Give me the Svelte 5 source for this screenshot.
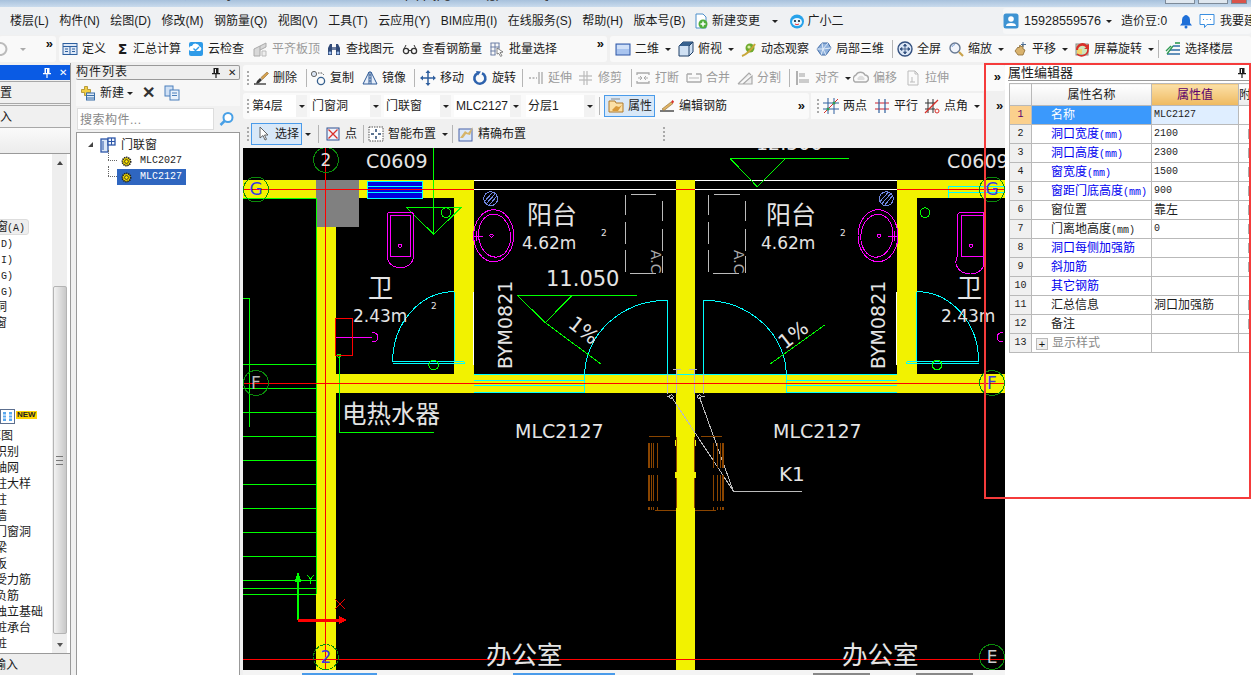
<script>
  const icons = {
    def: '<rect x="1" y="2.5" width="14" height="11" fill="#dfe9f7" stroke="#2d5f9e"/><path d="M1 5.5h14M8 5.5v8M3 8h3M3 10.5h3M10 8h3M10 10.5h3" stroke="#2d5f9e"/>',
    cloud: '<rect x="1" y="1" width="14" height="14" rx="2" fill="#2f9be8"/><path d="M3 10a2.5 2.5 0 0 1 1-5 4 4 0 0 1 7.5.5A2.4 2.4 0 0 1 12 10z" fill="#fff"/><path d="M5.5 7.5l2 2 3.5-3.5" stroke="#2f9be8" stroke-width="1.4" fill="none"/>',
    plane: '<path d="M2 15V8l6-3v10zM8 5l6-3v4l-6 3" fill="#d8d8d8" stroke="#aaa"/><path d="M10 10h4v5h-4z" fill="#eee" stroke="#bbb"/>',
    find: '<path d="M2 14V7l2-4h2v11zM14 14V7l-2-4h-2v11z" fill="#314a78"/><rect x="6" y="6" width="4" height="3" fill="#6d7ea0"/><circle cx="4" cy="12" r="1.4" fill="#9fc0ef"/><circle cx="12" cy="12" r="1.4" fill="#9fc0ef"/>',
    glass: '<circle cx="4" cy="10" r="2.6" fill="none" stroke="#333" stroke-width="1.3"/><circle cx="12" cy="10" r="2.6" fill="none" stroke="#333" stroke-width="1.3"/><path d="M6.5 9.5h3M2 8l2-4M14 8l-2-4" stroke="#333"/>',
    batch: '<path d="M1.5 2h9M1.5 6h9M1.5 10h5M1.5 14h5M2 2v12M6 2v12M10 2v6" stroke="#6c7fa5" fill="none"/><path d="M8 7l6 4-3 .6 2 3-1.400.8-1.800-3L8 13z" fill="#fff" stroke="#555" stroke-width=".7"/>',
    d2: '<rect x="1" y="3" width="14" height="11" fill="#a9c4ef" stroke="#2e56a5"/><rect x="2" y="4" width="12" height="4" fill="#d0e0f8"/>',
    top: '<path d="M1 5l4-4h10v10l-4 4H1z" fill="#cfe0f3" stroke="#1f3f66"/><path d="M1 5l4-4h10l-4 4z" fill="#37618f"/><path d="M11 5v10M11 5l4-4" stroke="#1f3f66"/>',
    orbit: '<circle cx="9" cy="7" r="4.500" fill="#6eaa2b"/><circle cx="8" cy="6" r="1.600" fill="#d9efa6"/><path d="M1 15c3-1 9-5 13-12" stroke="#c9a73a" stroke-width="2" fill="none"/>',
    local: '<path d="M1 8l5-6h6l3 5-5 7H5z" fill="#8fb1dc" stroke="#3f6aa5"/><path d="M6 2l1 6-2 6M1 8h6l8-1M12 2L7 8l3 6" stroke="#e8f0fb" fill="none" stroke-width=".9"/>',
    full: '<circle cx="8" cy="8" r="7" fill="#dbe6f5" stroke="#33507f" stroke-width="1.400"/><path d="M8 3v10M3 8h10M8 3L6.500 5h3zM8 13l-1.500-2h3zM3 8l2-1.500v3zM13 8l-2-1.500v3z" stroke="#33507f" fill="#33507f" stroke-width=".8"/>',
    zoom: '<circle cx="7" cy="7" r="5" fill="#f2f5fb" stroke="#687a94" stroke-width="1.400"/><path d="M11 11l4 4" stroke="#c8a24a" stroke-width="2.200"/><path d="M4 6a3.500 3.500 0 0 1 3-2.500" stroke="#7aa0d8" fill="none"/>',
    pan: '<path d="M3 10l3-4 1 1 1-3 1 2 2-2v4l2 1-2 5H6z" fill="#d9b26d" stroke="#8a6a32" stroke-width=".8"/><path d="M11 1v5M9 3.500h5" stroke="#4c6f95"/>',
    spin: '<rect x="2" y="3" width="12" height="11" fill="#cde6bc" stroke="#888"/><rect x="3" y="8" width="5" height="5" fill="#f3d36b"/><path d="M2 9a6.500 6.500 0 0 1 11-5l2-1v5h-5l2-1.500A4.500 4.500 0 0 0 4 9z" fill="#d9302a"/><path d="M14 8a6.500 6.500 0 0 1-11 5" stroke="#d9302a" stroke-width="1.600" fill="none"/>',
    floors: '<path d="M2 13h13M5 9h10M8 5h7" stroke="#2f6ea5" stroke-width="1.600"/><path d="M2 13l6-8M1 10l5-5" stroke="#2e9a52" stroke-width="1.300"/><path d="M10 2h5" stroke="#2e9a52" stroke-width="1.600"/>',
    brush: '<path d="M1 14h12" stroke="#333" stroke-width="1.300"/><path d="M4 11l3-3 2 2-3 3c-1 .5-2 .5-3 .5z" fill="#333"/><path d="M8 7.500L14 2l1.500 1.500-6 6z" fill="#d5a04d" stroke="#8f6a32" stroke-width=".6"/>',
    copy: '<circle cx="4" cy="4" r="2.600" fill="#dbe6f5" stroke="#666"/><circle cx="11" cy="11" r="3.600" fill="none" stroke="#37618f" stroke-width="1.300"/><path d="M8 3h4l2 2" stroke="#555" fill="none" stroke-dasharray="1.500 1"/>',
    mirror: '<path d="M7 2v12H1zM9 2v12h6z" fill="#e6eefa" stroke="#2e5a96"/><path d="M8 1v14" stroke="#2e5a96" stroke-dasharray="2 1"/>',
    move: '<path d="M8 1v14M1 8h14" stroke="#2f5f9e" stroke-width="1.500"/><path d="M8 0l2.500 3h-5zM8 16l2.500-3h-5zM0 8l3-2.500v5zM16 8l-3-2.500v5z" fill="#2f5f9e"/>',
    rot: '<path d="M10 3.200a5.500 5.500 0 1 1-4.500.1" fill="none" stroke="#2d62ad" stroke-width="2.600"/><path d="M4 1l5 .5-3 4z" fill="#2d62ad"/>',
    ext: '<path d="M1 8h8" stroke="#aaa" stroke-dasharray="2 1.500" stroke-width="1.500"/><path d="M11 2v12M14 2v12" stroke="#aaa" stroke-width="1.300"/>',
    trim: '<path d="M1 6h13M1 10h13" stroke="#aaa" stroke-width="1.200"/><path d="M6 1v14M9 1v14" stroke="#bbb" stroke-width="1.200"/>',
    brk: '<path d="M2 5V3h12v2M2 11v2h12v-2" fill="none" stroke="#aaa" stroke-width="1.300"/><path d="M3 8h3M10 8h3" stroke="#aaa"/><path d="M5 6l2 2-2 2M11 6L9 8l2 2" stroke="#aaa" fill="none"/>',
    mrg: '<path d="M1 4h5M10 4h5M1 12h14M1 4v8M15 4v8" fill="none" stroke="#aaa" stroke-width="1.300"/><path d="M3 8h10" stroke="#bbb"/>',
    split: '<path d="M1 14h14V6L6 14M1 14l11-11 2 2" fill="#eee" stroke="#aaa" stroke-width="1.200"/>',
    align: '<path d="M2 1v14" stroke="#999" stroke-width="1.500"/><rect x="4" y="3" width="6" height="4" fill="#ccc"/><rect x="4" y="9" width="10" height="4" fill="#ccc"/>',
    off: '<path d="M2 12a4 4 0 0 1 1-7 5 5 0 0 1 9 0 3.600 3.600 0 0 1 1 7z" fill="none" stroke="#aaa" stroke-width="1.400"/><path d="M5 10a2 2 0 0 1 .5-3 3 3 0 0 1 5 0 2 2 0 0 1 .5 3z" fill="#ddd"/>',
    str: '<path d="M3 1h7l3 3v11H3z" fill="#fafafa" stroke="#bbb"/><path d="M10 1v3h3M7 7v5M5 12h5" stroke="#bbb" fill="none"/>',
    attr: '<path d="M1 3h6l1 2h7v9H1z" fill="#fbe0a6" stroke="#b07a2d"/><path d="M4 12l4-4 3 1 3-2-4 6H5z" fill="#d89a3c"/><path d="M3 1h9" stroke="#888"/>',
    rebar: '<path d="M1 13h14" stroke="#222" stroke-width="1.200"/><path d="M3 11l9-7 2 1.500-9 7z" fill="#e1b465" stroke="#8a6a32" stroke-width=".6"/><path d="M12 4l2 1.500 1-2-1.500-1.500z" fill="#d9302a"/>',
    two: '<path d="M5 0v16M11 0v16M0 5h16M0 11h16" stroke="#2f5f9e"/><path d="M1 15L15 1" stroke="#d9302a"/><circle cx="5" cy="11" r="1.500" fill="#2e9a52"/><circle cx="11" cy="5" r="1.500" fill="#2e9a52"/>',
    par: '<path d="M1 5h14M1 11h14" stroke="#c23" stroke-width="1.200"/><path d="M5 1v14M11 1v14" stroke="#2f5f9e" stroke-width="1.200"/>',
    ang: '<path d="M1 5h10M1 11h10M4 1v14M9 1v14" stroke="#333"/><path d="M1 15L14 2" stroke="#d9302a" stroke-width="1.200"/><circle cx="13" cy="13" r="2" fill="none" stroke="#d9302a"/>',
    sel: '<path d="M5 1v11l3-2.500L10 14l1.500-.7L9.500 9H13z" fill="#fff" stroke="#555" stroke-width=".9"/>',
    pt: '<rect x="2" y="2" width="12" height="12" fill="#eef3fb" stroke="#2f4f8f"/><path d="M3.500 3.500l9 9M12.500 3.500l-9 9" stroke="#d9302a" stroke-width="1.300"/>',
    smart: '<rect x="1" y="1" width="14" height="14" fill="#fff" stroke="#555" stroke-dasharray="1.500 1"/><path d="M8 3v3M8 10v3M3 8h3M10 8h3M5 5h.1M11 5h.1M5 11h.1M11 11h.1" stroke="#27476f" stroke-width="1.500"/>',
    exact: '<rect x="1" y="3" width="13" height="12" fill="#dce8f8" stroke="#4760a8"/><path d="M2 12l5-7 3 2 5-6-3 8-4-1-3 4z" fill="#d6b56a"/>',
    newc: '<path d="M3 1h7l3 3v11H3z" fill="#fff" stroke="#4d8fca"/><circle cx="10" cy="11" r="4.500" fill="#4fae3c"/><path d="M10 8.500v5M7.500 11h5" stroke="#fff" stroke-width="1.500"/>',
    bot: '<circle cx="8" cy="8.500" r="7" fill="#27a2ea"/><ellipse cx="8" cy="9" rx="5" ry="4" fill="#e9f7ff"/><circle cx="6" cy="8" r="1.100" fill="#123"/><circle cx="10" cy="8" r="1.100" fill="#123"/><path d="M6 11q2 1.500 4 0" stroke="#e33" fill="none"/>',
    user: '<rect x="0.500" y="0.500" width="15" height="15" rx="2.500" fill="#3e93d2"/><circle cx="8" cy="6" r="2.800" fill="#fff"/><path d="M3 13q0-3 5-3t5 3z" fill="#fff"/>',
    bell: '<path d="M6 3a3 3 0 0 1 4 0q2 1 2 4v3l2 2.500H2L4 10V7q0-3 2-4z" fill="#1e6fd8"/><circle cx="8" cy="14" r="1.500" fill="#1e6fd8"/>',
    chat: '<path d="M1 1.500h14v10H8l-2.500 3v-3H1z" fill="#fff" stroke="#3a8ee0"/><path d="M4 6.500h1M7.500 6.500h1M11 6.500h1" stroke="#3a8ee0"/>',
    add: '<path d="M2.500 4.500h3v-3h3v3h3v3h-3v3h-3v-3h-3z" fill="#f3cf45" stroke="#a98a22" stroke-width=".8"/><rect x="7.500" y="8" width="8" height="7" fill="#dbe7f6" stroke="#3a6fa8"/><path d="M7.500 10.500h8M7.500 13h8" stroke="#3a6fa8"/>',
    docs: '<rect x="1" y="1" width="8" height="10" fill="#cfe0f5" stroke="#4b7fbb"/><rect x="6" y="5" width="9" height="10" fill="#e9f1fb" stroke="#4b7fbb"/><path d="M8 8h5M8 10.500h5" stroke="#4b7fbb"/>',
    mag: '<circle cx="9" cy="6.500" r="4.500" fill="#fff" stroke="#48a0e6" stroke-width="2"/><path d="M5.500 10l-4 4" stroke="#48a0e6" stroke-width="2.500"/>',
    gear: '<circle cx="8" cy="8" r="6" fill="#ffe500" stroke="#222" stroke-dasharray="2 1" stroke-width="2.500"/><circle cx="8" cy="8" r="2.800" fill="#ffe500" stroke="#222" stroke-width="1.200"/>',
    door: '<rect x="1" y="2" width="7" height="13" fill="#dbe7f8" stroke="#2d56a8" stroke-width="1.300"/><rect x="8" y="1" width="7" height="7" fill="#eef4fc" stroke="#2d56a8" stroke-width="1.300"/><path d="M11.500 1v7M8 4.500h7M3 4v9" stroke="#2d56a8"/>'
  };

  const menu = ['楼层(L)', '构件(N)', '绘图(D)', '修改(M)', '钢筋量(Q)', '视图(V)', '工具(T)', '云应用(Y)', 'BIM应用(I)', '在线服务(S)', '帮助(H)', '版本号(B)'];

  const mainA = [
    { i: 'def', t: '定义', w: 54 }, { g: 'Σ', t: '汇总计算', w: 72 }, { i: 'cloud', t: '云检查', w: 64 },
    { i: 'plane', t: '平齐板顶', w: 74, dim: 1 }, { i: 'find', t: '查找图元', w: 76 }, { i: 'glass', t: '查看钢筋量', w: 87 }, { i: 'batch', t: '批量选择', w: 68 }
  ];
  const mainB = [
    { i: 'd2', t: '二维', w: 63, c: 1 }, { i: 'top', t: '俯视', w: 63, c: 1 }, { i: 'orbit', t: '动态观察', w: 75 },
    { i: 'local', t: '局部三维', w: 75 }, { s: 1, w: 6 }, { i: 'full', t: '全屏', w: 51 }, { i: 'zoom', t: '缩放', w: 64, c: 1 },
    { i: 'pan', t: '平移', w: 62, c: 1 }, { i: 'spin', t: '屏幕旋转', w: 83, c: 1 }, { s: 1, w: 8 }, { i: 'floors', t: '选择楼层', w: 70 }
  ];
  const edit = [
    { i: 'brush', t: '删除', w: 52 }, { s: 1, w: 5 }, { i: 'copy', t: '复制', w: 52 }, { i: 'mirror', t: '镜像', w: 51 }, { s: 1, w: 7 },
    { i: 'move', t: '移动', w: 52 }, { i: 'rot', t: '旋转', w: 49 }, { s: 1, w: 7 }, { i: 'ext', t: '延伸', w: 50, dim: 1 }, { i: 'trim', t: '修剪', w: 52, dim: 1 }, { s: 1, w: 5 },
    { i: 'brk', t: '打断', w: 51, dim: 1 }, { i: 'mrg', t: '合并', w: 51, dim: 1 }, { i: 'split', t: '分割', w: 51, dim: 1 }, { s: 1, w: 7 },
    { i: 'align', t: '对齐', w: 58, dim: 1, c: 1 }, { i: 'off', t: '偏移', w: 52, dim: 1 }, { i: 'str', t: '拉伸', w: 46, dim: 1 }
  ];
  const combos = [
    { t: '第4层', w: 46, gap: 3 }, { t: '门窗洞', w: 60, gap: 3 }, { t: '门联窗', w: 56, gap: 3 }, { t: 'MLC2127', w: 56, gap: 5 }, { t: '分层1', w: 58, gap: 3 }
  ];
  const attrTools = [
    { s: 1, w: 6 }, { i: 'attr', t: '属性', w: 51, a: 1 }, { s: 1, w: 4, blank: 1 }, { i: 'rebar', t: '编辑钢筋', w: 70 }
  ];
  const lineTools = [
    { i: 'two', t: '两点', w: 51 }, { i: 'par', t: '平行', w: 50 }, { i: 'ang', t: '点角', w: 58, c: 1 }
  ];
  const placeTools = [
    { i: 'pt', t: '点', w: 37 }, { s: 1, w: 6 }, { i: 'smart', t: '智能布置', w: 83, c: 1 }, { s: 1, w: 7 }, { i: 'exact', t: '精确布置', w: 70 }
  ];

  const listTop = [['门联窗', '(A)', 1], ['墙洞', '(D)'], ['壁龛', '(I)'], ['连梁', '(G)'], ['过梁', '(G)'], ['带形洞', ''], ['带形窗', '']];
  const listBottom = [['草图', -11], ['识别', -5], ['轴网', -5], ['柱大样', -5], ['柱', -5], ['墙', -5], ['门窗洞', -5], ['梁', -5], ['板', -5], ['受力筋', -5], ['负筋', -5], ['独立基础', -5], ['桩承台', -5], ['桩', -5]];

  const props = [
    { n: '名称', v: 'MLC2127', sel: 1 }, { n: '洞口宽度', u: '(mm)', v: '2100', b: 1, k: 1 }, { n: '洞口高度', u: '(mm)', v: '2300', b: 1, k: 1 },
    { n: '窗宽度', u: '(mm)', v: '1500', b: 1, k: 1 }, { n: '窗距门底高度', u: '(mm)', v: '900', b: 1, k: 1 }, { n: '窗位置', v: '靠左', k: 1, cjk: 1 },
    { n: '门离地高度', u: '(mm)', v: '0', k: 1 }, { n: '洞口每侧加强筋', v: '', b: 1, k: 1 }, { n: '斜加筋', v: '', b: 1, k: 1 }, { n: '其它钢筋', v: '', b: 1 },
    { n: '汇总信息', v: '洞口加强筋', k: 1, cjk: 1 }, { n: '备注', v: '', k: 1 }, { n: '显示样式', v: '', plus: 1 }
  ];

  const stair = [364, 388, 412, 436, 460, 484, 508, 532, 556, 580, 588, 594];

  const doorPaths = [
    'M454 291.700A61.300 70 0 0 0 392.700 361.700',
    'M667.700 300.300A83 75 0 0 0 584.700 375',
    'M703.300 300.300A83 75 0 0 1 786.300 375',
    'M916.700 291.700A62 70 0 0 1 978.700 361.700'
  ];
  const bars = [[648.3, 1.5], [650.8, 1.5], [653.3, 1], [657.3, 1], [713.3, 1], [717, 1], [719.5, 1.5], [722, 1.5]];
</script>

{#snippet tool(it)}
  {#if it.s}
    <span class="sep" class:blank={it.blank} style:width="{it.w}px"></span>
  {:else}
    <span class="tool" class:dim={it.dim} class:active={it.a} style:width="{it.w}px">
      {#if it.i}<svg class="ic" viewBox="0 0 16 16">{@html icons[it.i]}</svg>{/if}
      {#if it.g}<b class="sigma">{it.g}</b>{/if}
      <span>{it.t}</span>
      {#if it.c}<i class="caret"></i>{/if}
    </span>
  {/if}
{/snippet}

{#snippet icon(n)}
  <svg class="ic" viewBox="0 0 16 16">{@html icons[n]}</svg>
{/snippet}

{#snippet chev()}
  <span class="chev">»</span>
{/snippet}

{#snippet pin()}
  <svg class="pin" viewBox="0 0 10 11"><path d="M2.500 1h5v5h1.500v1.200H5.600V11h-1.200V7.200H1V6h1.500zM4 2v4h1V2z" fill="currentColor"/></svg>
{/snippet}

<div class="app">
  <header class="title">
    <span class="title-text">广联达土建算量 [C:\Users\Administrator\Desktop\pp\jpg\工程 (g).GCL10]</span>
    <span class="winbtns"><i></i><i></i><i class="close"></i></span>
  </header>

  <nav class="menubar">
    <div class="menu-left">
      {#each menu as m}<span>{m}</span>{/each}
      <span class="with-icon first-extra">{@render icon('newc')}新建变更<i class="caret wide"></i></span>
      <span class="with-icon">{@render icon('bot')}广小二</span>
    </div>
    <div class="menu-right">
      {@render icon('user')}
      <span class="phone">15928559576</span><i class="caret"></i>
      <span class="beans">造价豆:0</span>
      {@render icon('bell')}
      {@render icon('chat')}
      <span>我要建议</span>
    </div>
  </nav>

  <div class="mainbar">
    <div class="group undo">
      <svg class="ic undo-ic" viewBox="0 0 16 16"><path d="M3 4a6 6 0 1 1 1 9" fill="none" stroke="#bbb" stroke-width="2"/></svg>
      <i class="caret dimc"></i>
      {@render chev()}
    </div>
    <div class="group ga">
      {#each mainA as it}{@render tool(it)}{/each}
      {@render chev()}
    </div>
    <div class="group gb">
      {#each mainB as it}{@render tool(it)}{/each}
    </div>
  </div>

  <main class="body">
    <aside class="nav">
      <div class="nav-title">{@render pin()}<span class="x">✕</span></div>
      <div class="nav-row"><span>配置</span></div>
      <div class="nav-row"><span>导入</span></div>
      <div class="nav-head"></div>
      <div class="nav-box">
        <div class="nav-list">
          {#each listTop as [t, u, hl]}
            <div class="li top" class:hl>{t}<span class="unit">{u}</span></div>
          {/each}
          <div class="li-new">
            <svg class="new-ic" viewBox="0 0 15 15"><rect x=".5" y=".5" width="14" height="14" fill="#fff" stroke="#5c6f8f"/><path d="M3 3h3v9H3zM9 3h3v9H9z" fill="#5aa8ee"/><path d="M3 6h3M3 9h3M9 6h3M9 9h3" stroke="#fff"/></svg>
            <span class="new">NEW</span>
          </div>
          {#each listBottom as [t, o]}
            <div class="li" style:margin-left="{o}px">{t}</div>
          {/each}
        </div>
        <div class="scroll">
          <i class="arr up"></i>
          <div class="thumb"><i></i></div>
          <i class="arr down"></i>
        </div>
      </div>
      <div class="nav-foot"><span>输入</span></div>
    </aside>

    <section class="parts">
      <div class="parts-title"><span>构件列表</span>{@render pin()}<span class="x">✕</span></div>
      <div class="parts-tools">
        <svg class="ic big" viewBox="0 0 16 16">{@html icons.add}</svg>
        <span class="new-label">新建</span><i class="caret"></i>
        <span class="big-x">✕</span>
        <svg class="ic" viewBox="0 0 16 16">{@html icons.docs}</svg>
      </div>
      <div class="search">
        <div class="search-box">搜索构件...</div>
        <svg class="ic" viewBox="0 0 16 16">{@html icons.mag}</svg>
      </div>
      <div class="tree">
        <div class="node root">
          <i class="tri"></i>
          <svg class="ic" viewBox="0 0 16 16">{@html icons.door}</svg>
          <span>门联窗</span>
        </div>
        <div class="node leaf">
          <svg class="ic sm" viewBox="0 0 16 16">{@html icons.gear}</svg>
          <span class="mono">MLC2027</span>
        </div>
        <div class="node leaf last">
          <span class="selected">
            <svg class="ic sm" viewBox="0 0 16 16">{@html icons.gear}</svg>
            <span class="mono">MLC2127</span>
          </span>
        </div>
      </div>
    </section>

    <section class="center">
      <div class="row r1">
        <i class="handle"></i>
        {#each edit as it}{@render tool(it)}{/each}
        <span class="spacer"></span>
        {@render chev()}
      </div>
      <div class="row r2">
        <div class="group2">
          <i class="handle"></i>
          {#each combos as c}
            <span class="combo" style:margin-right="{c.gap}px">
              <span class="combo-text" style:width="{c.w}px">{c.t}</span>
              <span class="combo-btn"><i class="caret"></i></span>
            </span>
          {/each}
          {#each attrTools as it}{@render tool(it)}{/each}
          <span class="spacer"></span>
          {@render chev()}
        </div>
        <div class="group3">
          <i class="handle"></i>
          {#each lineTools as it}{@render tool(it)}{/each}
        </div>
        {@render chev()}
      </div>
      <div class="row r3">
        <i class="handle"></i>
        <span class="tool active sel-btn">{@render icon('sel')}<span>选择</span></span>
        <i class="caret after-sel"></i>
        <span class="sep sel-sep"></span>
        {#each placeTools as it}{@render tool(it)}{/each}
        <i class="handle far"></i>
      </div>

      <svg class="cad" viewBox="243 148 762 522">
        <!-- walls -->
        <g fill="#f2f200">
          <rect x="243" y="180" width="73.300" height="18.300"/>
          <rect x="358.700" y="180" width="115" height="18.300"/>
          <rect x="316.300" y="226" width="19.400" height="444"/>
          <rect x="454" y="198" width="19.700" height="195"/>
          <rect x="316" y="374" width="689" height="18.700"/>
          <rect x="676.300" y="180" width="18.400" height="490"/>
          <rect x="897" y="180" width="19.700" height="213"/>
          <rect x="897" y="180" width="108" height="18.300"/>
          <rect x="675" y="440" width="21" height="6"/>
          <rect x="675" y="472" width="21" height="6"/>
        </g>
        <rect x="316.300" y="180" width="42.400" height="46.700" fill="#808080"/>
        <rect x="367.300" y="180.700" width="55" height="17.600" fill="#0000e0"/>
        <g stroke="#0ff" fill="none">
          <rect x="367.800" y="181" width="54.500" height="17"/>
          <path d="M368 186h54M368 192.500h54"/>
          <path d="M948 186v12M948 186h57M948 189.500h57M948 192.500h57"/>
          <path d="M473.700 380.300h111M473.700 385.700h111M473.700 392.300h111M786.300 380.300h111M786.300 385.700h111M786.300 392.300h111M473.700 374.300h423"/>
          <path d="M584.700 375v17.500M786.300 375v17.500"/>
          {#each doorPaths as d}<path {d}/>{/each}
          <path d="M454 291.700v70M392.700 361.700h71.300M392.700 363.800h72M464 361.700v2"/>
          <path d="M667.700 300.300V374M703.300 300.300V374"/>
          <path d="M916.700 291.700v70M978.700 361.700h-72M906.700 361.700v2.200M906.700 363.800h72"/>
        </g>
        <!-- white outlines -->
        <g stroke="#fff" fill="none">
          <path d="M473.700 180.500h202.600M473.700 189.500h202.600M694.700 180.500H897M694.700 189.500H897"/>
          <path d="M473.700 291.700v73M896.800 291.700v73"/>
        </g>
        <!-- green -->
        <g stroke="#00ff00" fill="none">
          <path d="M243 198h73.300M316.300 198v396"/>
          <path d="M249 298.300v129M243 298.300h6"/>
          {#each stair as y}<path d="M243 {y}h73.300"/>{/each}
          <path d="M406.300 207.300h55l-27.600 27zM433.700 148v86.300"/>
          <circle cx="446" cy="212.700" r="4.800"/>
          <circle cx="433.700" cy="365" r="4.800"/>
          <circle cx="925" cy="212.700" r="4.800"/>
          <circle cx="937" cy="365" r="4.800"/>
          <path d="M339 355.700v76.600h94.700"/>
          <circle cx="339" cy="355.700" r="1.800"/>
          <path d="M517.300 295.300H637M517.300 295.300l28 27.400L572 295.300M545.300 322.700l56 41.600"/>
          <path d="M769.700 364.300l55-39.300"/>
          <path d="M730.300 158.700h118.400M730.300 158.700l27 28 28-28"/>
        </g>
        <!-- magenta -->
        <g stroke="#ff00ff" fill="none">
          <path d="M387.300 214a2 2 0 0 1 2-1.300h22a2 2 0 0 1 2 1.300v42.700a13 11 0 0 1-26 0z"/>
          <rect x="390.300" y="215" width="20" height="41.700"/>
          <circle cx="400" cy="245.700" r="1.800"/>
          <ellipse cx="493.700" cy="235.700" rx="20" ry="26"/>
          <ellipse cx="494.500" cy="235.700" rx="16" ry="21.500" transform="rotate(-6 494 235)"/>
          <circle cx="491.500" cy="235.700" r="1.600"/>
          <path d="M473.300 231v10M476 231v10M473 236h10M478 232v8"/>
          <path d="M335 337.700h37M372 333a4.500 4.500 0 1 1 0 8.500"/>
          <path d="M958 214a2 2 0 0 1 2-1.300h23v54.500a13 11 0 0 1-25.700-10.500z"/>
          <rect x="961" y="215" width="22" height="41.700"/>
          <circle cx="971" cy="245.700" r="1.800"/>
          <ellipse cx="878" cy="235.700" rx="20" ry="26"/>
          <ellipse cx="877" cy="235.700" rx="16" ry="21.500" transform="rotate(6 877 235)"/>
          <circle cx="879" cy="235.700" r="1.600"/>
          <path d="M897 231v10M894 231v10M888 236h10M892 232v8"/>
          <path d="M1003 333a4.500 4.500 0 1 0 0 8.500"/>
        </g>
        <!-- hatch -->
        <g stroke="#6f86e0" fill="none">
          <circle cx="490.700" cy="198.700" r="7"/>
          <path d="M486 204l9-10M484.500 201.500l8-9M489 205.500l7.500-9"/>
          <circle cx="886.300" cy="198.700" r="7"/>
          <path d="M881.500 204l9-10M880 201.500l8-9M884.500 205.500l7.500-9"/>
        </g>
        <!-- A.C boxes -->
        <g stroke="#bbb" fill="none">
          <path d="M631 194.300h25.300M630.300 273.300h25.400M625.300 195v20M625.300 222v22M625.300 250v22M662.300 201v20M662.300 229v22M662.300 256v17"/>
          <path d="M714 194.300h25.700M713 273.300h25.700M708.300 195v20M708.300 222v22M708.300 250v22M745.300 201v20M745.300 229v22M745.300 256v17"/>
          <path d="M667.700 374v20M676 370v24M694.700 370v24M703.300 374v20M673 369.500h8M689 369.500h8"/>
          <circle cx="671.300" cy="396.700" r="1.800"/>
          <circle cx="699.300" cy="396.700" r="1.800"/>
          <path d="M671.300 396.700L733.300 491M699.300 396.700L733.300 491H801.700M667 396.700h3M702 396.700h3"/>
        </g>
        <!-- brown column -->
        <g fill="#8a4500">
          {#each bars as [x, w]}
            <rect {x} y="443.300" width={w} height="25"/>
            <rect {x} y="475" width={w} height="25.700"/>
            <rect {x} y="507.300" width={w} height="3"/>
          {/each}
        </g>
        <path d="M649 436.500h21M701 436.500h21M655 510.500h21M695 510.500h21M676 437v35M676 478v30M694.700 437v35M694.700 478v30" stroke="#8a4500" fill="none"/>
        <!-- red axes -->
        <g stroke="#ff0000" fill="none">
          <path d="M243 189.500h230.700M676 189.500h18.700M897 189.500h108M243 383.500h762M243 659.500h762M325.700 148v522"/>
          <rect x="335.500" y="318.500" width="17" height="37.200"/>
        </g>
        <!-- axis markers -->
        <g stroke="#0b8a0b" fill="none">
          <circle cx="326" cy="160" r="12.500"/>
          <circle cx="256" cy="189.500" r="12.500"/>
          <circle cx="256" cy="383" r="12.500"/>
          <circle cx="992" cy="189.500" r="12.500"/>
          <circle cx="992" cy="383" r="12.500"/>
          <circle cx="326" cy="657" r="12.500" stroke-dasharray="3 1"/>
          <circle cx="992" cy="657" r="12.500"/>
        </g>
        <g class="axis">
          <text x="326" y="166" fill="#ddd">2</text>
          <text x="256" y="195" fill="#3a3ae0">G</text>
          <text x="256" y="389" fill="#bbb">F</text>
          <text x="992" y="195" fill="#3a3ae0">G</text>
          <text x="992" y="389" fill="#3a3ae0">F</text>
          <text x="326" y="663" fill="#3a3ae0">2</text>
          <text x="992" y="663" fill="#ccc">E</text>
        </g>
        <!-- UCS -->
        <path d="M298 620v-42" stroke="#00ff00" stroke-width="2"/>
        <path d="M298 571l-3.500 11h7z" fill="#00ff00"/>
        <path d="M298 620h43" stroke="#ff0000" stroke-width="3"/>
        <path d="M347 620l-8-4v8z" fill="#ff0000"/>
        <path d="M307 575l3.500 4 3.500-4M310.500 579v5" stroke="#0f0" fill="none"/>
        <path d="M335 599l10 10M345 599l-10 10" stroke="#e00" fill="none"/>
        <!-- labels -->
        <g class="lbl">
          <text x="366" y="168" font-size="19">C0609</text>
          <text x="947" y="168" font-size="19">C0609</text>
          <text x="756" y="150" font-size="19">12.500</text>
          <text x="527" y="224" font-size="25">阳台</text>
          <text x="766" y="224" font-size="25">阳台</text>
          <text x="522" y="249" font-size="17">4.62m</text>
          <text x="761" y="249" font-size="17">4.62m</text>
          <text x="601" y="236" font-size="9">2</text>
          <text x="840" y="236" font-size="9">2</text>
          <text x="431" y="309" font-size="9">2</text>
          <text x="546" y="286" font-size="21">11.050</text>
          <text x="368" y="297" font-size="25">卫</text>
          <text x="957" y="297" font-size="25">卫</text>
          <text x="353" y="322" font-size="17">2.43m</text>
          <text x="941" y="322" font-size="17">2.43m</text>
          <text x="342" y="423" font-size="24.500">电热水器</text>
          <text x="515" y="438" font-size="19">MLC2127</text>
          <text x="773" y="438" font-size="19">MLC2127</text>
          <text x="779" y="481" font-size="20">K1</text>
          <text x="486" y="664" font-size="25.500">办公室</text>
          <text x="842" y="664" font-size="25.500">办公室</text>
          <text transform="translate(512 369) rotate(-90)" font-size="19">BYM0821</text>
          <text transform="translate(885 369) rotate(-90)" font-size="19">BYM0821</text>
          <text transform="translate(567 326) rotate(38)" font-size="20">1%</text>
          <text transform="translate(785 350) rotate(-38)" font-size="20">1%</text>
          <text class="ac" transform="translate(651 250) rotate(90)" font-size="14">A.C</text>
          <text class="ac" transform="translate(734 250) rotate(90)" font-size="14">A.C</text>
        </g>
      </svg>

      <div class="status">
        <i class="t1"></i><i class="t2"></i><i class="t3"></i><i class="t4"></i><i class="t5"></i>
      </div>
    </section>

    <section class="props">
      <div class="props-title"><span>属性编辑器</span>{@render pin()}</div>
      <table>
        <colgroup><col class="c0" /><col class="c1" /><col class="c2" /><col /></colgroup>
        <thead>
          <tr><th></th><th>属性名称</th><th class="val">属性值</th><th class="more"><span>附加</span></th></tr>
        </thead>
        <tbody>
          {#each props as p, i}
            <tr>
              <td class="num" class:cur={p.sel}>{i + 1}</td>
              <td class="name" class:sel={p.sel} class:blue={p.b} class:gray={p.plus}>
                {#if p.plus}<span class="plus">+</span>{/if}{p.n}{#if p.u}<span class="unit">{p.u}</span>{/if}
              </td>
              <td class="value" class:selv={p.sel} class:cjk={p.cjk}>{p.v}</td>
              <td class="chk">{#if p.k}<i></i>{/if}</td>
            </tr>
          {/each}
        </tbody>
      </table>
    </section>

    <div class="annot"></div>
  </main>
</div>

<style>
  :global(body) { margin: 0; background: #fff; }
  .app {
    width: 1251px; height: 675px; overflow: hidden; position: relative; display: flex; flex-direction: column;
    font: 12px/16px "Liberation Sans", "Noto Sans CJK SC", sans-serif; color: #1c1c1c; background: #f0f0f0;
  }
  i { display: block; font-style: normal; }
  .ic { width: 16px; height: 16px; flex: none; display: block; }
  .caret { width: 0; height: 0; border: 3px solid transparent; border-top: 3px solid #222; border-bottom: 0; flex: none; }
  .caret.wide { margin-left: 9px; }
  .dimc { border-top-color: #aaa; }
  .chev { font: bold 13px/12px "Liberation Sans", sans-serif; color: #111; flex: none; }
  .spacer { flex: 1; }

  .title { height: 7px; flex: none; display: flex; overflow: hidden; background: linear-gradient(#a7c1dc, #c9dbed); }
  .title-text { margin: -14px 0 0 132px; white-space: nowrap; color: #333; font-size: 13px; }
  .winbtns { margin-left: auto; display: flex; gap: 3px; padding-right: 4px; }
  .winbtns i { width: 28px; height: 3px; background: #dfe7ef; border: 1px solid #7d8a98; border-top: 0; }
  .winbtns .close { background: #d9534a; width: 14px; }

  .menubar { height: 28px; flex: none; display: flex; justify-content: space-between; align-items: center; background: #eff1f3; overflow: hidden; }
  .menu-left { display: flex; align-items: center; gap: 10.500px; padding-left: 10px; white-space: nowrap; }
  .first-extra { margin-left: -3px; }
  .with-icon { display: flex; align-items: center; gap: 3px; }
  .menu-right { display: flex; align-items: center; width: 248px; flex: none; gap: 5px; white-space: nowrap; background: #f6f7f8; height: 26px; border-radius: 3px; box-sizing: border-box; overflow: hidden; }
  .phone { font-size: 12.600px; }
  .beans { margin: 0 6px 0 4px; }

  .mainbar { height: 28px; flex: none; display: flex; gap: 3px; background: #f0f0f0; }
  .group { height: 26px; margin-top: 1px; display: flex; align-items: center; background: #f9f9f9; border-radius: 3px; white-space: nowrap; box-sizing: border-box; }
  .undo { width: 57px; padding-left: 0; margin-left: -1px; position: relative; }
  .undo-ic { margin-left: -6px; }
  .undo .caret { margin-left: 11px; }
  .undo .chev { position: absolute; right: 3px; top: 2px; }
  .ga { width: 548px; padding-left: 3px; position: relative; }
  .ga .chev { position: absolute; right: 3px; top: 2px; }
  .gb { flex: 1; padding-left: 5px; }

  .tool { display: inline-flex; align-items: center; gap: 4px; box-sizing: border-box; flex: none; white-space: nowrap; height: 22px; }
  .tool .caret { margin-left: 2px; }
  .sigma { width: 13px; text-align: center; font: bold 14px "DejaVu Sans", sans-serif; flex: none; }
  .dim { color: #9b9b9b; }
  .sep { height: 18px; flex: none; position: relative; display: block; }
  .sep::after { content: ""; position: absolute; left: 1px; top: 0; bottom: 0; width: 1px; background: #b5b5b5; }
  .sep.blank::after { display: none; }
  .sel-sep { width: 8px; margin-left: 9px; }
  .active { background: #d8e8f8; border: 1px solid #4a9bea; padding-left: 3px; }
  .sel-btn { width: 51px; }

  .body { flex: 1; min-height: 0; display: grid; grid-template-columns: 71px 172px 762px 1fr; position: relative; }

  .nav { display: flex; flex-direction: column; height: 612px; overflow: hidden; border-right: 1px solid #9a9a9a; box-sizing: border-box; }
  .nav-title { margin-top: 2px; height: 15px; flex: none; background: #0a5be4; color: #fff; display: flex; align-items: center; justify-content: flex-end; gap: 7px; padding-right: 3px; }
  .x { font-size: 10px; line-height: 10px; }
  .pin { width: 10px; height: 11px; flex: none; }
  .nav-row { height: 21px; flex: none; margin-top: 1px; background: #f0f0f0; border: 1px solid #a8a8a8; border-width: 1px 0; overflow: hidden; white-space: nowrap; display: flex; align-items: center; }
  .nav-row span { margin-left: -12px; font-size: 12px; }
  .nav-head { height: 25px; flex: none; background: linear-gradient(#fafafa, #ececec); }
  .nav-box { height: 501px; flex: none; background: #fff; border-top: 1px solid #9a9a9a; border-bottom: 1px solid #9a9a9a; display: flex; overflow: hidden; box-sizing: border-box; }
  .nav-list { width: 52px; flex: none; padding-top: 65px; white-space: nowrap; overflow: hidden; }
  .li { height: 16px; line-height: 16px; font-size: 12px; }
  .li.top { margin-left: -29px; }
  .li.hl { width: 58px; box-sizing: border-box; background: #eee; border: 1px solid #ddd; border-radius: 3px; line-height: 14px; }
  .li.hl .unit { margin-left: -1px; }
  .li-new { display: flex; align-items: flex-start; margin: 75px 0 2px 0; height: 20px; position: relative; }
  .new-ic { width: 15px; height: 15px; display: block; margin-top: 3px; }
  .new { font: bold 8px/8px "Liberation Sans", sans-serif; background: #ffd400; color: #222; padding: 0 1px; margin: 5px 0 0 1px; }
  .scroll { width: 15px; flex: none; background: #eee; display: flex; flex-direction: column; align-items: center; position: relative; }
  .arr { width: 0; height: 0; border: 3.500px solid transparent; flex: none; position: absolute; }
  .arr.up { top: 7px; border-top: 0; border-bottom: 4px solid #444; }
  .arr.down { bottom: 6px; border-bottom: 0; border-top: 4px solid #555; }
  .thumb { position: absolute; top: 132px; height: 348px; width: 14px; box-sizing: border-box; background: linear-gradient(90deg, #f2f2f2, #c8c8c8); border: 1px solid #b4b4b4; border-radius: 2px; display: flex; align-items: center; justify-content: center; }
  .thumb i { width: 7px; height: 7px; border-top: 1px solid #777; border-bottom: 1px solid #777; background: linear-gradient(#777 0 0) center/100% 1px no-repeat; }
  .nav-foot { flex: 1; background: #eee; overflow: hidden; white-space: nowrap; padding-top: 3px; }
  .nav-foot span { margin-left: -6px; }

  .parts { margin-left: 5px; width: 164px; display: flex; flex-direction: column; height: 612px; box-sizing: border-box; overflow: hidden; }
  .parts-title { margin-top: 2px; height: 15px; flex: none; box-sizing: border-box; border: 1px solid #999; border-width: 1px 1px 1px 0; border-radius: 2px; background: #eee; display: flex; align-items: center; gap: 7px; padding-right: 3px; line-height: 13px; }
  .parts-title span:first-child { flex: 1; font-size: 12px; letter-spacing: 1px; }
  .parts-tools { height: 26px; flex: none; display: flex; align-items: center; padding-left: 3px; background: #f7f7f7; }
  .new-label { margin-left: 5px; }
  .parts-tools .caret { margin: 0 9px 0 3px; }
  .big-x { font-size: 16px; line-height: 16px; color: #333; width: 18px; margin-right: 4px; font-weight: bold; }
  .search { height: 26px; flex: none; display: flex; align-items: center; background: #f1f1f1; }
  .search-box { width: 137px; height: 22px; margin-left: 1px; box-sizing: border-box; background: #fff; color: #888; padding: 3px 2px; border: 1px solid #ddd; font-size: 12px; letter-spacing: .5px; }
  .search .ic { margin-left: 5px; }
  .tree { flex: 1; background: #fff; border: 1px solid #999; border-bottom: 0; border-width: 1px 1px 0 1px; box-sizing: border-box; padding-top: 3px; }
  .node { display: flex; align-items: center; height: 16px; position: relative; }
  .root { padding-left: 11px; gap: 2px; height: 17px; }
  .root span { margin-left: 3px; font-size: 12px; }
  .tri { width: 0; height: 0; border-left: 5px solid transparent; border-bottom: 5px solid #444; margin-right: 5px; }
  .leaf { padding-left: 44px; gap: 8px; }
  .leaf::before { content: ""; position: absolute; left: 31px; top: 7px; width: 9px; border-top: 1px dotted #666; }
  .leaf::after { content: ""; position: absolute; left: 31px; top: -3px; height: 10px; border-left: 1px dotted #666; }
  .ic.sm { width: 11px; height: 11px; }
  .mono { font: 10px/16px "Liberation Mono", monospace; }
  .selected { display: flex; align-items: center; gap: 8px; background: #2f66c0; color: #fff; width: 69px; height: 16px; box-sizing: border-box; padding-left: 4px; }
  .leaf.last { padding-left: 40px; }

  .center { display: flex; flex-direction: column; height: 612px; width: 762px; overflow: hidden; }
  .row { flex: none; display: flex; align-items: center; white-space: nowrap; position: relative; background: #fafafa; border-radius: 3px; }
  .handle { width: 2px; height: 15px; flex: none; margin-right: 4px; background: repeating-linear-gradient(#aaa 0 2px, transparent 2px 4px); }
  .handle.far { margin-left: 135px; }
  .r1 { height: 26px; margin-top: 2px; padding-left: 4px; }
  .r1 .chev { position: relative; top: -1px; margin-right: 4px; }
  .r2 { height: 26px; margin-top: 2px; background: #f0f0f0; padding-left: 0; gap: 2px; }
  .group2 { width: 566px; height: 26px; box-sizing: border-box; padding: 0 4px; background: #fafafa; border-radius: 3px; display: flex; align-items: center; flex: none; }
  .group3 { width: 172px; height: 26px; box-sizing: border-box; padding-left: 6px; background: #fafafa; display: flex; align-items: center; flex: none; }
  .group2 .handle { margin-right: 1px; }
  .r2 > .chev { margin-left: 11px; }
  .combo { display: flex; height: 22px; flex: none; }
  .combo-text { background: #fff; display: block; line-height: 22px; padding-left: 2px; box-sizing: border-box; overflow: hidden; }
  .combo-btn { width: 11px; background: #f2f2f2; display: flex; align-items: center; justify-content: center; }
  .r3 { height: 26px; margin-top: 2px; padding-left: 4px; background: #f0f0f0; }
  .r3 > .handle:first-child { margin-right: 2px; }
  .after-sel { margin-left: 3px; margin-right: -3px; }
  .cad { width: 762px; height: 522px; flex: none; display: block; background: #000; margin-top: 1px; }
  .cad path, .cad rect, .cad circle, .cad ellipse { shape-rendering: crispEdges; }
  .axis text { font: 17px "DejaVu Sans", sans-serif; text-anchor: middle; }
  .lbl text { font-family: "DejaVu Sans", "Noto Sans CJK SC", sans-serif; fill: #e4e4e4; }
  .lbl text.ac { fill: #aaa; }
  .status { height: 5px; flex: none; background: #f4f4f4; position: relative; }
  .status i { position: absolute; top: 3px; height: 2px; }
  .status .t1 { left: 59px; width: 75px; background: #4a9bea; }
  .status .t2 { left: 270px; width: 52px; background: #4a9bea; }
  .status .t3 { left: 322px; width: 50px; background: #4a9bea; }
  .status .t4 { left: 570px; width: 57px; background: #888; }
  .status .t5 { left: 673px; width: 57px; background: #888; }

  .props { background: #fff; height: 612px; padding-left: 4px; overflow: hidden; }
  .props-title { margin: 2px 0 0 -1px; height: 16px; box-sizing: border-box; border-bottom: 1px solid #999; display: flex; align-items: center; justify-content: space-between; padding-right: 4px; font-size: 13px; letter-spacing: 0; line-height: 14px; }
  table { border-collapse: collapse; table-layout: fixed; width: 242px; margin-top: 2px; background: #fff; }
  col.c0 { width: 22px; }
  col.c1 { width: 120px; }
  col.c2 { width: 87px; }
  th, td { border: 1px solid #b9b9b9; padding: 0; font-weight: 400; height: 19px; white-space: nowrap; overflow: hidden; box-sizing: border-box; line-height: 18px; }
  th { height: 22px; background: linear-gradient(#fff, #ececec); text-align: center; font-size: 12px; }
  th.val { background: linear-gradient(#fbe0a8, #efb95f); color: #5b006b; }
  th.more { text-align: left; }
  .num { background: #f0f0f0; text-align: center; font: 10px/18px "Liberation Mono", monospace; }
  .num.cur { background: #fbd08d; color: #5b006b; }
  .name { padding-left: 19px; font-size: 12px; }
  .name.sel { background: #3b99fc; color: #fff; }
  .blue { color: #0000f0; }
  .gray { color: #888; padding-left: 4px; }
  .unit { font: 10px "Liberation Mono", monospace; }
  .plus { display: inline-block; width: 10px; height: 10px; line-height: 10px; margin-right: 4px; text-align: center; border: 1px solid #bbb; background: #eee; color: #111; font: 11px/10px "Liberation Sans", sans-serif; vertical-align: middle; }
  .value { padding-left: 2px; font: 10px/18px "Liberation Mono", "Noto Sans CJK SC", monospace; }
  .value.cjk { font: 12px/18px "Liberation Sans", "Noto Sans CJK SC", sans-serif; }
  .selv { background: #dfeeff; }
  .chk i { width: 10px; height: 10px; margin-left: 9px; background: #eee; border: 1px solid #aaa; box-sizing: border-box; }

  .annot { position: absolute; left: 984px; top: 0; width: 267px; height: 436px; box-sizing: border-box; border: 2.500px solid #f53b3b; pointer-events: none; }
</style>
